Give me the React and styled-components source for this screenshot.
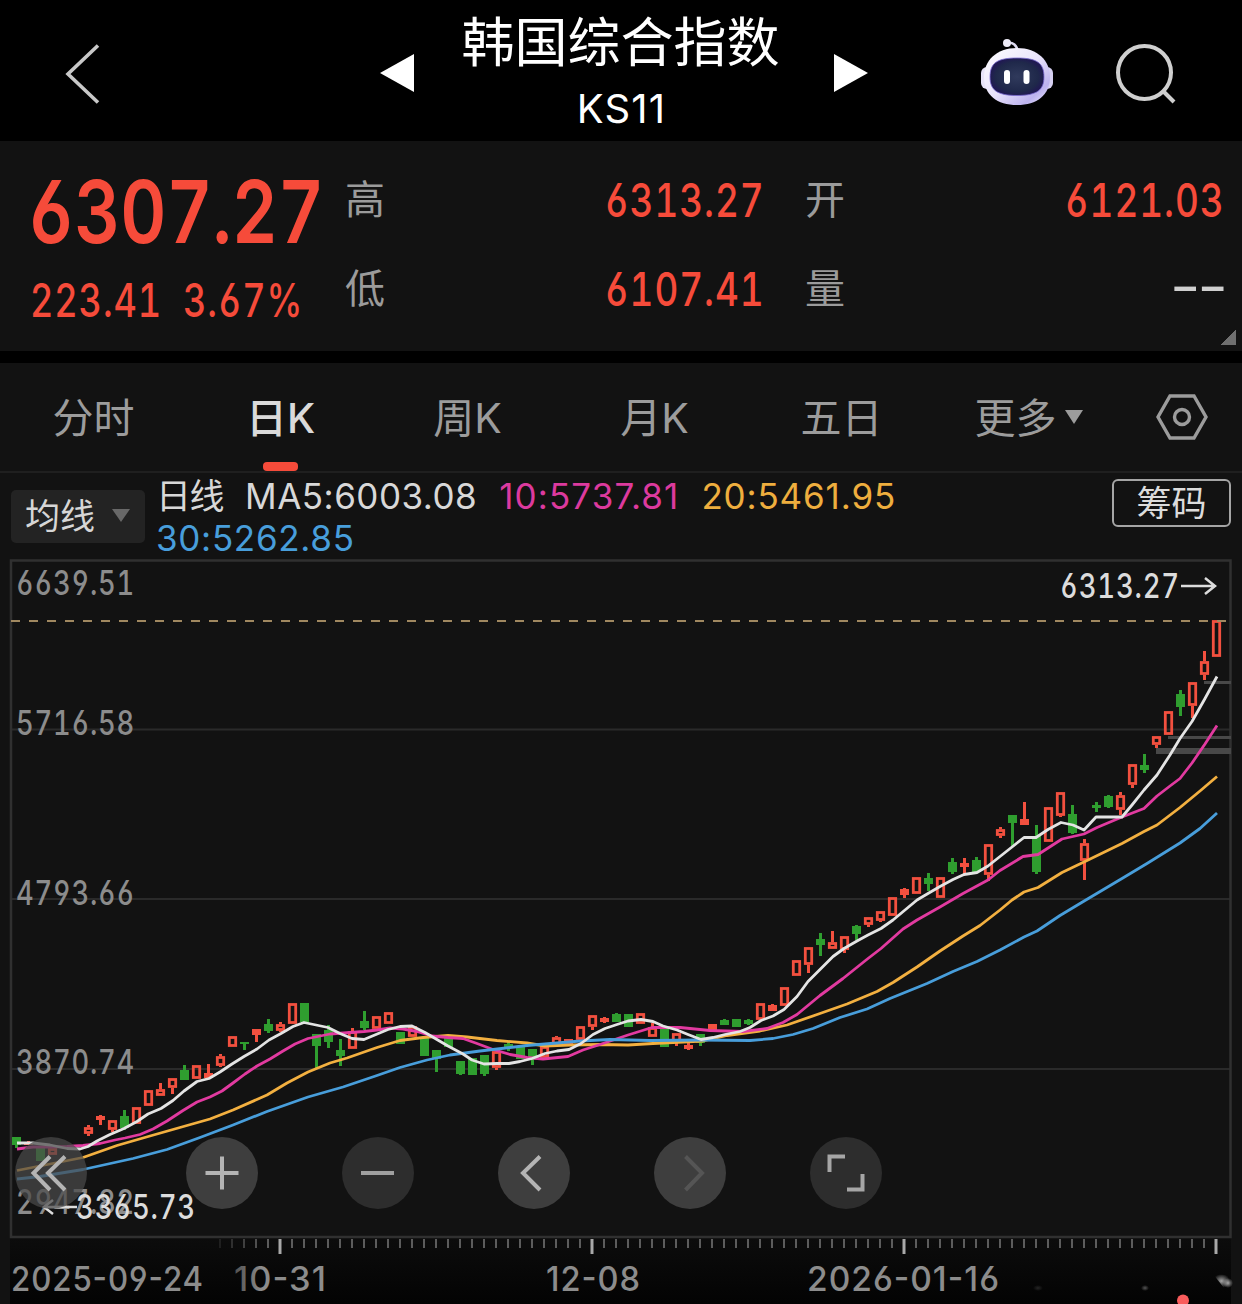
import React from 'react';
import styled, { createGlobalStyle } from 'styled-components';

const GlobalStyle = createGlobalStyle`
  * {
    box-sizing: border-box;
  }

  body {
    margin: 0;
    background: #121212;
    font-family: Inter, 'Noto Sans CJK SC', sans-serif;
  }
`;

const Page = styled.div`
  width: 1242px;
  height: 1304px;
  overflow: hidden;
  background: #121212;
`;

const Header = styled.header`
  display: flex;
  align-items: flex-start;
  height: 141px;
  padding-left: 64px;
  background: #000;
`;

const IconButton = styled.button`
  display: block;
  flex: none;
  align-self: flex-start;
  padding: 0;
  border: none;
  background: none;
  margin: ${({ $margin }) => $margin};

  svg {
    display: block;
  }
`;

const TitleBlock = styled.div`
  width: 420px;
  padding: 15px 7px 0 0;
  text-align: center;
  color: #fff;
`;

const Title = styled.h1`
  margin: 0 0 13px;
  font-size: 53px;
  font-weight: 400;
  line-height: 56px;
`;

const Code = styled.div`
  padding-left: 2px;
  font-size: 40px;
  line-height: 50px;
  letter-spacing: 1.2px;
`;

const QuotePanel = styled.section`
  position: relative;
  display: flex;
  height: 210px;
  background: #121212;
`;

const PriceColumn = styled.div`
  width: 345px;
  padding: 21px 0 0 28px;
`;

/* narrow DIN-like figures */
const Figure = styled.span`
  display: inline-block;
  flex: none;
  white-space: nowrap;
  font-feature-settings: ${({ $features }) => $features || "'tnum', 'cv03', 'cv04'"};
  font-size: ${({ $size }) => $size}px;
  font-weight: ${({ $weight }) => $weight || 500};
  letter-spacing: ${({ $spacing }) => $spacing || '0.025em'};
  color: ${({ $color }) => $color || '#f64b3a'};
  transform: scaleX(${({ $scale }) => $scale || 0.785});
  transform-origin: ${({ $origin }) => $origin || 'left'} center;
`;

const Price = styled.div`
  height: 100px;
  line-height: 100px;
`;

const Change = styled.div`
  display: grid;
  grid-template-columns: 153px 1fr;
  height: 76px;
  padding-left: 2px;
  line-height: 76px;
`;

const StatGrid = styled.div`
  display: grid;
  grid-template-columns: 420px 420px;
  grid-auto-rows: 89px;
  column-gap: 40px;
  padding-top: 14px;
`;

const Stat = styled.div`
  display: flex;
  justify-content: space-between;
  line-height: 89px;
`;

const StatLabel = styled.span`
  font-size: 40px;
  color: #9b9b9b;
`;

const Corner = styled.i`
  position: absolute;
  right: 6px;
  bottom: 6px;
  width: 15px;
  height: 15px;
  background: linear-gradient(135deg, transparent 50%, #6f6f6f 50%);
`;

const Tabs = styled.nav`
  display: flex;
  height: 122px;
  border-top: 12px solid #000;
  border-bottom: 2px solid #1f1f1f;
`;

const Tab = styled.button`
  display: flex;
  flex-direction: column;
  align-items: center;
  width: 187px;
  padding: 0;
  border: none;
  background: none;
  font-family: inherit;
  font-size: 41px;
  font-weight: ${({ $active }) => ($active ? 500 : 400)};
  line-height: 110px;
  color: ${({ $active }) => ($active ? '#dadada' : '#9c9c9c')};

  &::after {
    content: '';
    width: 35px;
    height: 9px;
    margin-top: -11px;
    border-radius: 4px;
    background: ${({ $active }) => ($active ? '#f64b3a' : 'transparent')};
  }
`;

const TabLabel = styled.span`
  display: flex;
  align-items: center;
  gap: 8px;
  height: 110px;
  white-space: nowrap;
`;

const Caret = styled.i`
  margin-bottom: 3px;
  border: solid transparent;
  border-width: ${({ $size }) => $size}px 9px 0;
  border-top-color: ${({ $color }) => $color};
`;

const Legend = styled.section`
  display: flex;
  align-items: flex-start;
  height: 86px;
  padding: 6px 11px 0;
`;

const AverageSelect = styled.button`
  display: flex;
  flex: none;
  align-items: center;
  justify-content: space-between;
  width: 134px;
  height: 53px;
  margin-top: 11px;
  padding: 0 15px 2px 14px;
  border: none;
  border-radius: 5px;
  background: #232323;
  font-family: inherit;
  font-size: 35px;
  line-height: 50px;
  color: #d6d6d6;

  ${Caret} {
    margin-bottom: 0;
  }
`;

const AverageValues = styled.div`
  display: flex;
  flex: 1;
  flex-wrap: wrap;
  align-content: flex-start;
  column-gap: 22px;
  padding-left: 11px;
  margin-top: -4px;
`;

const AverageValue = styled.span`
  font-size: 35px;
  line-height: 42px;
  letter-spacing: ${({ $spacing }) => $spacing}px;
  color: ${({ $color }) => $color};
`;

const ChipButton = styled.button`
  width: 119px;
  height: 48px;
  padding: 0;
  border: 2px solid #a5a5a5;
  border-radius: 6px;
  background: none;
  font-family: inherit;
  font-size: 35px;
  line-height: 44px;
  color: #dcdcdc;
`;

const ChartArea = styled.section`
  position: relative;
  height: 745px;

  > svg {
    display: block;
  }
`;

const AxisText = styled.text`
  font-size: 34px;
  font-weight: 500;
  letter-spacing: 1px;
  font-feature-settings: 'tnum', 'cv03', 'cv04';
  fill: ${({ $color }) => $color || '#8c8c8c'};
`;

/* proportional here, the tabular hyphen is too small */
const DateText = styled(AxisText)`
  font-feature-settings: 'case', 'cv03', 'cv04';
`;

/* floats over the lower part of the chart */
const Controls = styled.div`
  position: absolute;
  left: 15px;
  bottom: 95px;
  display: flex;
  gap: 84px;
`;

const RoundButton = styled.button`
  width: 72px;
  height: 72px;
  padding: 0;
  border: none;
  border-radius: 50%;
  background: ${({ $dim }) => ($dim ? '#2d2d2d' : '#3e3e3e')};

  &:first-child {
    margin-right: 15px;
    background: rgba(74, 74, 74, 0.72);
  }

  svg {
    display: block;
    fill: none;
    stroke: ${({ $stroke }) => $stroke || '#b4b4b4'};
    stroke-width: 4;
  }
`;

const RED = '#f2503f';
const GREEN = '#2f9e2f';

// [color, high, body top, body bottom, low], one entry per trading day
const candles = [
  ['g', 1137, 1137, 1145, 1148],
  ['r', 1141, 1142, 1145, 1145],
  ['g', 1148, 1148, 1161, 1161],
  ['r', 1148, 1148, 1155, 1155],
  null,
  null,
  ['r', 1125, 1127, 1134, 1136],
  ['r', 1115, 1116, 1120, 1125],
  ['r', 1120, 1120, 1130, 1132],
  ['g', 1110, 1116, 1128, 1130],
  ['r', 1107, 1107, 1124, 1124],
  ['r', 1090, 1090, 1106, 1106],
  ['r', 1083, 1089, 1096, 1096],
  ['r', 1078, 1078, 1088, 1094],
  ['g', 1065, 1070, 1080, 1080],
  ['r', 1065, 1065, 1079, 1079],
  ['r', 1064, 1073, 1078, 1078],
  ['r', 1054, 1056, 1066, 1067],
  ['r', 1036, 1036, 1047, 1047],
  ['g', 1042, 1042, 1044, 1050],
  ['r', 1029, 1029, 1035, 1042],
  ['g', 1019, 1024, 1031, 1033],
  ['r', 1022, 1024, 1031, 1032],
  ['r', 1003, 1003, 1024, 1024],
  ['g', 1003, 1003, 1022, 1022],
  ['g', 1034, 1034, 1046, 1068],
  ['g', 1025, 1030, 1042, 1048],
  ['g', 1039, 1050, 1056, 1066],
  ['r', 1028, 1031, 1049, 1049],
  ['g', 1011, 1021, 1028, 1030],
  ['r', 1016, 1016, 1029, 1029],
  ['r', 1012, 1012, 1024, 1024],
  ['g', 1032, 1032, 1044, 1044],
  ['r', 1026, 1026, 1037, 1037],
  ['g', 1037, 1037, 1056, 1056],
  ['g', 1050, 1050, 1059, 1072],
  ['g', 1037, 1037, 1047, 1047],
  ['g', 1061, 1061, 1074, 1075],
  ['g', 1058, 1058, 1075, 1075],
  ['g', 1055, 1055, 1074, 1076],
  ['r', 1051, 1051, 1068, 1070],
  ['g', 1042, 1044, 1048, 1051],
  ['g', 1046, 1046, 1059, 1059],
  ['g', 1049, 1049, 1060, 1065],
  ['r', 1046, 1046, 1058, 1058],
  ['r', 1036, 1037, 1046, 1046],
  ['r', 1039, 1039, 1045, 1045],
  ['r', 1026, 1026, 1040, 1040],
  ['r', 1015, 1015, 1027, 1030],
  ['r', 1017, 1018, 1022, 1023],
  ['g', 1013, 1014, 1022, 1022],
  ['g', 1014, 1014, 1027, 1027],
  ['r', 1013, 1013, 1024, 1024],
  ['r', 1023, 1027, 1037, 1037],
  ['g', 1029, 1029, 1047, 1047],
  ['r', 1033, 1033, 1043, 1046],
  ['r', 1043, 1045, 1049, 1050],
  ['g', 1034, 1034, 1043, 1046],
  ['r', 1024, 1024, 1030, 1030],
  ['g', 1019, 1020, 1025, 1025],
  ['g', 1019, 1019, 1027, 1027],
  ['g', 1019, 1020, 1024, 1025],
  ['r', 1003, 1003, 1020, 1020],
  ['r', 1004, 1005, 1011, 1011],
  ['r', 987, 987, 1006, 1006],
  ['r', 960, 960, 976, 976],
  ['r', 947, 947, 965, 973],
  ['g', 933, 939, 945, 956],
  ['r', 931, 942, 949, 949],
  ['r', 936, 936, 950, 953],
  ['g', 925, 926, 934, 940],
  ['r', 917, 917, 925, 927],
  ['r', 911, 911, 921, 922],
  ['r', 897, 897, 916, 916],
  ['r', 888, 889, 895, 898],
  ['r', 877, 877, 894, 894],
  ['g', 873, 878, 884, 891],
  ['r', 877, 877, 898, 898],
  ['g', 858, 862, 872, 874],
  ['r', 858, 863, 867, 874],
  ['g', 857, 860, 872, 872],
  ['r', 844, 844, 875, 881],
  ['r', 827, 829, 836, 838],
  ['g', 815, 815, 823, 846],
  ['r', 802, 819, 825, 825],
  ['g', 825, 836, 872, 874],
  ['r', 807, 807, 842, 842],
  ['r', 792, 792, 816, 817],
  ['g', 805, 814, 833, 834],
  ['r', 839, 843, 861, 880],
  ['g', 802, 805, 808, 812],
  ['g', 795, 796, 807, 808],
  ['r', 792, 795, 810, 815],
  ['r', 764, 764, 785, 788],
  ['g', 754, 765, 770, 773],
  ['r', 736, 736, 745, 748],
  ['r', 711, 711, 735, 735],
  ['g', 690, 694, 707, 716],
  ['r', 682, 682, 706, 718],
  ['r', 651, 661, 675, 680],
  ['r', 620, 620, 657, 657],
];

const averages = [
  {
    color: '#f3b040',
    points:
      '17,1170.5 50,1164 83,1157.5 117,1145.5 150,1136 187,1125.5 210,1119 233,1110 267,1095 287,1083 308,1072 330,1063 347,1058 377,1047.5 400,1040.5 423,1037.5 448,1035.5 467,1037 497,1040.5 527,1043 545,1046 570,1045 600,1044.5 628,1045 653,1043.5 703,1041 727,1035.5 760,1031 787,1025 820,1013.5 847,1004 877,991.5 893,982.5 917,967 940,951 963,936 980,925.5 1000,910 1012,900 1024,892 1038,887.5 1062,872.5 1085,861.5 1122,843.5 1144,831.5 1157,825 1180,807.5 1200,791 1217,776.5',
  },
  {
    color: '#e23aa0',
    points:
      '17,1149 33,1147 50,1147 67,1146.5 83,1145.5 100,1143.5 115,1140 125,1138 140,1134.5 153,1129 167,1121 183,1110.5 197,1102 210,1097 222,1091 233,1083 245,1074 257,1066 270,1059 283,1051 295,1044 308,1038.5 330,1034 350,1032.5 364,1031.5 377,1030 390,1028 403,1029 417,1031.5 432,1036 448,1037.5 463,1038.5 477,1043.5 493,1049.5 510,1054.5 527,1057.5 543,1059 568,1056.5 583,1050 597,1045.5 628,1035 652,1027.5 680,1027.5 710,1030.5 743,1031.5 767,1028.5 783,1022.5 797,1014.5 820,995.5 843,978.5 868,958.5 881,948.5 903,929 917,920 940,907 963,893.5 988,880 1000,870.5 1023,856.5 1038,854.5 1062,839 1084,834 1097,827.5 1122,817 1144,808.5 1157,796 1170,786 1180,778.5 1192,763 1205,744 1217,725.5',
  },
  {
    color: '#489edb',
    points:
      '17,1179 40,1176.5 83,1169.5 133,1158.5 167,1149.5 200,1137.5 233,1125 267,1111.5 308,1097 343,1087 377,1075.5 400,1067.5 427,1060 450,1055 480,1051 527,1045.5 557,1043 580,1041 610,1039.5 650,1040.5 700,1040 750,1040.5 773,1038.5 793,1034.5 813,1028.5 840,1017.5 867,1009 890,998.5 927,983.5 953,971.5 977,961.5 1000,950 1024,937 1037,931 1060,915.5 1085,900.5 1122,878.5 1147,863.5 1180,843 1200,828.5 1217,813',
  },
  {
    color: '#e4e4e4',
    points:
      '17,1143 33,1143 50,1145 67,1148.5 80,1149 88,1146.5 97,1141 110,1134.5 124,1128.5 137,1121.5 148,1114 161,1108.5 173,1100.5 184,1091 197,1081.5 209,1078.5 220,1072 232,1064 244,1056.5 257,1049 269,1040 281,1033.5 293,1026.5 304,1022.5 328,1027.5 340,1033.5 352,1038.5 364,1039.5 376,1034.5 388,1029.5 400,1026.5 412,1026 425,1032.5 448,1046 463,1054 472,1060 484,1064 497,1063.5 509,1063.5 520,1061.5 532,1058.5 545,1053.5 557,1051 569,1049.5 581,1043.5 593,1034.5 605,1028.5 617,1024.5 628,1021 641,1019.5 653,1021.5 663,1026 677,1030 688,1034.5 701,1039.5 713,1037.5 725,1034.5 740,1031.5 750,1027.5 761,1020.5 773,1016 784,1009.5 797,996.5 808,981.5 820,969.5 833,956.5 844,948.5 857,941 868,935 881,928.5 893,920 905,910 917,900 928,893.5 940,886.5 953,879.5 964,874.5 977,872.5 988,866 1000,856.5 1012,847 1024,837.5 1036,837.5 1048,829.5 1061,822.5 1073,825 1084,830 1096,817 1122,817 1132,805 1144,790 1157,775 1170,755 1180,738.5 1192,721.5 1205,698.5 1217,676.5',
  },
];

const priceLabels = [
  ['6639.51', 595],
  ['5716.58', 735],
  ['4793.66', 905],
  ['3870.74', 1074],
  ['2947.82', 1214],
];

const dateLabels = [
  ['2025-09-24', 11, 193],
  ['10-31', 234, 93],
  ['12-08', 546, 95],
  ['2026-01-16', 807, 193],
];

const Candle = ({ x, data }) => {
  const [type, high, top, bottom, low] = data;
  const color = type === 'r' ? RED : GREEN;
  const hollow = type === 'r' && bottom - top >= 7;

  return (
    <g>
      {high < top && <rect x={x - 1.5} y={high} width="3" height={top - high} fill={color} />}
      {low > bottom && <rect x={x - 1.5} y={bottom} width="3" height={low - bottom} fill={color} />}
      {hollow ? (
        <rect x={x - 3.2} y={top + 1.5} width="6.4" height={bottom - top - 3} fill="none" stroke={color} strokeWidth="2.8" />
      ) : (
        <rect x={x - 4.5} y={top} width="9" height={bottom - top} fill={color} />
      )}
    </g>
  );
};

const Ticks = () => {
  const ticks = [];
  for (let x = 220; x <= 1216; x += 12) {
    const major = (x - 280) % 312 === 0;
    ticks.push(
      <rect
        key={x}
        x={major ? x - 1.5 : x - 1}
        y="1239"
        width={major ? 3 : 2}
        height={major ? 15 : 9}
        fill={major ? '#a8a8a8' : '#5c5c5c'}
        opacity={x < 260 ? (x - 205) / 60 : 1}
      />
    );
  }
  return <g>{ticks}</g>;
};

const Chart = () => (
  <svg width="1242" height="745" viewBox="0 559 1242 745">
    <defs>
      <linearGradient id="axisFade" x1="0" y1="0" x2="0" y2="1">
        <stop offset="0" stopColor="#0c0c0c" />
        <stop offset="1" stopColor="#030303" />
      </linearGradient>
      <linearGradient id="dateFade" gradientUnits="userSpaceOnUse" x1="232" y1="0" x2="262" y2="0">
        <stop offset="0" stopColor="#4c4c4c" />
        <stop offset="1" stopColor="#8c8c8c" />
      </linearGradient>
      <radialGradient id="smudge">
        <stop offset="0" stopColor="#a5a5a5" />
        <stop offset="1" stopColor="#a5a5a5" stopOpacity="0" />
      </radialGradient>
    </defs>

    <rect x="10" y="1238" width="1221" height="66" fill="url(#axisFade)" />

    {[729.5, 899, 1069].map((y) => (
      <line key={y} x1="11" y1={y} x2="1230" y2={y} stroke="#2a2a2a" strokeWidth="2" />
    ))}
    <rect x="11" y="560.5" width="1219.5" height="676.5" fill="none" stroke="#303030" strokeWidth="2.5" />

    <rect x="1204" y="681" width="27" height="3" fill="#484848" />
    <rect x="1168" y="736" width="63" height="3" fill="#484848" />
    <rect x="1156" y="748" width="75" height="6" fill="#484848" />

    {priceLabels.map(([text, y]) => (
      <AxisText key={text} x="16" y={y} textLength="119" lengthAdjust="spacingAndGlyphs">{text}</AxisText>
    ))}

    {candles.map((data, i) => data && <Candle key={i} x={16.5 + i * 12} data={data} />)}

    <line x1="11" y1="621" x2="1230" y2="621" stroke="#a08860" strokeWidth="2" strokeDasharray="9 9" />

    {averages.map(({ color, points }) => (
      <polyline key={color} points={points} fill="none" stroke={color} strokeWidth="2.8" strokeLinejoin="round" />
    ))}

    <AxisText $color="#dcdcdc" x="1060" y="598" textLength="120" lengthAdjust="spacingAndGlyphs">6313.27</AxisText>
    <path d="M1181 586H1214M1205 578L1215 586L1205 594" fill="none" stroke="#dcdcdc" strokeWidth="2.5" />
    <AxisText $color="#dcdcdc" x="76" y="1219" textLength="120" lengthAdjust="spacingAndGlyphs">3365.73</AxisText>
    <path d="M77 1207H44M53 1200L44 1207L53 1214" fill="none" stroke="#dcdcdc" strokeWidth="2.5" />

    <Ticks />
    {dateLabels.map(([text, x, width]) => (
      <DateText
        key={text}
        x={x}
        y="1291"
        textLength={width}
        lengthAdjust="spacingAndGlyphs"
        $color={text === '10-31' ? 'url(#dateFade)' : undefined}
      >
        {text}
      </DateText>
    ))}

    <circle cx="1183" cy="1300.5" r="6" fill="#f95c5c" />
    <path d="M1213 1274L1228 1275L1230 1286L1224 1288Z" fill="url(#smudge)" />
    <circle cx="1228" cy="1283" r="5" fill="url(#smudge)" />
    <ellipse cx="1145" cy="1288" rx="4" ry="3" fill="url(#smudge)" opacity="0.5" />
    <ellipse cx="1038" cy="1288" rx="5" ry="3" fill="url(#smudge)" opacity="0.2" />
  </svg>
);

const RobotIcon = () => (
  <svg width="76" height="70" viewBox="979 37 76 70">
    <defs>
      <linearGradient id="shell" x1="0" y1="0" x2="1" y2="1">
        <stop offset="0" stopColor="#ffffff" />
        <stop offset="0.5" stopColor="#e9e3fb" />
        <stop offset="0.8" stopColor="#bcb2ee" />
        <stop offset="1" stopColor="#f4f1ff" />
      </linearGradient>
      <radialGradient id="visor">
        <stop offset="0" stopColor="#303a5c" />
        <stop offset="0.8" stopColor="#1f284a" />
        <stop offset="1" stopColor="#201a52" />
      </radialGradient>
    </defs>
    <path d="M1007 43C1013 42 1017 45 1018 52" fill="none" stroke="#dedbf0" strokeWidth="2.6" />
    <circle cx="1007" cy="43" r="4" fill="#eeecf8" />
    <rect x="981" y="67" width="12" height="22" rx="6" fill="#e8e4f8" />
    <rect x="1041" y="67" width="12" height="22" rx="6" fill="#d6d0f2" />
    <path d="M1017 48C1038 48 1050 61 1050 77C1050 95 1037 105 1017 105C997 105 984 95 984 77C984 61 996 48 1017 48Z" fill="url(#shell)" />
    <path d="M1017 58C1037 58 1044 63 1044 77C1044 90 1037 95.500 1017 95.500C997 95.500 990 90 990 77C990 63 997 58 1017 58Z" fill="url(#visor)" stroke="#7a6bd0" strokeWidth="0.8" />
    <rect x="1004" y="70" width="6" height="14" rx="3" fill="#fff" />
    <rect x="1023.500" y="70" width="6" height="14" rx="3" fill="#fff" />
  </svg>
);

const stats = [
  { label: '高', value: '6313.27' },
  { label: '开', value: '6121.03' },
  { label: '低', value: '6107.41' },
  { label: '量', value: '--', color: '#cfcfcf', scale: 1.42, spacing: '-0.05em', features: "'case'" },
];

const tabs = ['分时', '日K', '周K', '月K', '五日'];

const values = [
  { text: '日线', color: '#d8d8d8', spacing: -1.5 },
  { text: 'MA5:6003.08', color: '#d8d8d8', spacing: 0.5 },
  { text: '10:5737.81', color: '#dc3a9e', spacing: 1.1 },
  { text: '20:5461.95', color: '#eeae3e', spacing: 0.85 },
  { text: '30:5262.85', color: '#489edb', spacing: 0.7 },
];

const controls = [
  { name: 'first', path: 'M50 19.500L33 36L50 53M35 19.500L18.500 36L35 53' },
  { name: 'zoom in', path: 'M19.500 36H52.500M36 19.500V52.500' },
  { name: 'zoom out', path: 'M19 36H52', dim: true, stroke: '#a0a0a0' },
  { name: 'previous', path: 'M42 19.500L25 36L42 53' },
  { name: 'next', path: 'M31.500 19.500L48 36L31.500 53', stroke: '#555' },
  { name: 'full screen', path: 'M35 19.500H19.500V35M37 52.500H52.500V37', dim: true, stroke: '#a6a6a6' },
];

const App = () => (
  <Page>
    <GlobalStyle />

    <Header>
      <IconButton aria-label="back" $margin="42px 276px 0 0">
        <svg width="40" height="64" viewBox="64 42 40 64">
          <path d="M98 45.500L68 74L98 102.500" fill="none" stroke="#c8c8c8" strokeWidth="3.6" />
        </svg>
      </IconButton>
      <IconButton aria-label="previous index" $margin="54px 0 0">
        <svg width="34" height="38" viewBox="0 0 34 38">
          <path d="M34 0V38L0 19Z" fill="#fff" />
        </svg>
      </IconButton>
      <TitleBlock>
        <Title>韩国综合指数</Title>
        <Code>KS11</Code>
      </TitleBlock>
      <IconButton aria-label="next index" $margin="54px 0 0">
        <svg width="34" height="38" viewBox="0 0 34 38">
          <path d="M0 0V38L34 19Z" fill="#fff" />
        </svg>
      </IconButton>
      <IconButton aria-label="assistant" $margin="37px 0 0 111px">
        <RobotIcon />
      </IconButton>
      <IconButton aria-label="search" $margin="42px 0 0 59px">
        <svg width="64" height="64" viewBox="1114 42 64 64">
          <circle cx="1144.500" cy="72.500" r="26.500" fill="none" stroke="#cfcfcf" strokeWidth="4" />
          <path d="M1163 91L1174 102" stroke="#cfcfcf" strokeWidth="4" />
        </svg>
      </IconButton>
    </Header>

    <QuotePanel>
      <PriceColumn>
        <Price>
          <Figure $size={87} $weight={600} $scale={0.82} $spacing="0">6307.27</Figure>
        </Price>
        <Change>
          <Figure $size={46}>223.41</Figure>
          <Figure $size={46}>3.67%</Figure>
        </Change>
      </PriceColumn>
      <StatGrid>
        {stats.map(({ label, value, color, scale, spacing, features }) => (
          <Stat key={label}>
            <StatLabel>{label}</StatLabel>
            <Figure
              $size={47}
              $origin="right"
              $color={color}
              $scale={scale}
              $spacing={spacing}
              $features={features}
            >
              {value}
            </Figure>
          </Stat>
        ))}
      </StatGrid>
      <Corner />
    </QuotePanel>

    <Tabs>
      {tabs.map((tab) => (
        <Tab key={tab} $active={tab === '日K'}>
          <TabLabel>{tab}</TabLabel>
        </Tab>
      ))}
      <Tab>
        <TabLabel>
          更多
          <Caret $size={14} $color="#9c9c9c" />
        </TabLabel>
      </Tab>
      <IconButton aria-label="chart settings" $margin="30px 0 0 33px">
        <svg width="54" height="48" viewBox="1155 393 54 48">
          <path d="M1170 396H1194L1206 417L1194 438H1170L1158 417Z" fill="none" stroke="#9c9c9c" strokeWidth="3.4" />
          <circle cx="1182" cy="417" r="7.500" fill="none" stroke="#9c9c9c" strokeWidth="3.4" />
        </svg>
      </IconButton>
    </Tabs>

    <Legend>
      <AverageSelect>
        均线
        <Caret $size={13} $color="#686868" />
      </AverageSelect>
      <AverageValues>
        {values.map(({ text, color, spacing }) => (
          <AverageValue key={text} $color={color} $spacing={spacing}>{text}</AverageValue>
        ))}
      </AverageValues>
      <ChipButton>筹码</ChipButton>
    </Legend>

    <ChartArea>
      <Chart />
      <Controls>
        {controls.map(({ name, path, dim, stroke }) => (
          <RoundButton key={name} aria-label={name} $dim={dim} $stroke={stroke}>
            <svg width="72" height="72" viewBox="0 0 72 72">
              <path d={path} />
            </svg>
          </RoundButton>
        ))}
      </Controls>
    </ChartArea>
  </Page>
);

export default App;
